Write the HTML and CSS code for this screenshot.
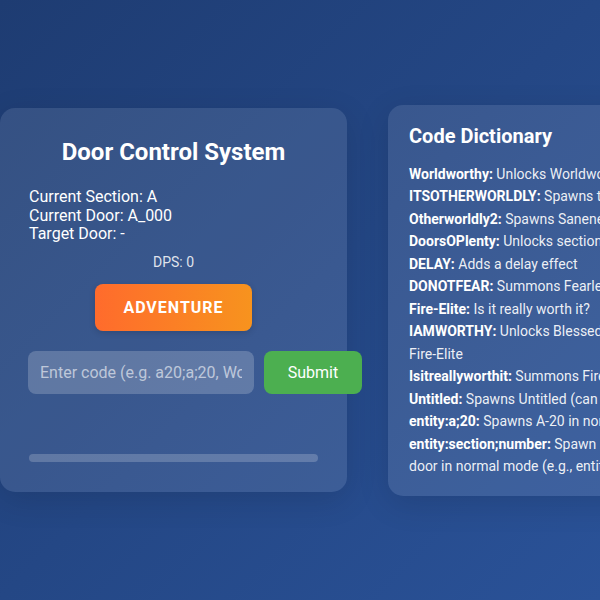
FILE: index.html
```html
<!DOCTYPE html>
<html lang="en">
<head>
<meta charset="utf-8">
<title>Door Control System</title>
<link rel="stylesheet" href="styles.css">
</head>
<body>
<main class="layout">
  <section class="panel control">
    <h1 class="panel-title">Door Control System</h1>
    <div class="status">
      <div>Current Section: A</div>
      <div>Current Door: A_000</div>
      <div>Target Door: -</div>
    </div>
    <div class="dps">DPS: 0</div>
    <button class="adventure" type="button">ADVENTURE</button>
    <div class="code-row">
      <input class="code-input" type="text" placeholder="Enter code (e.g. a20;a;20, Worldworthy)">
      <button class="submit" type="button">Submit</button>
    </div>
    <div class="progress"><div class="progress-fill"></div></div>
  </section>

  <section class="panel dictionary">
    <h2 class="dict-title">Code Dictionary</h2>
    <ul class="codes">
      <li><b>Worldworthy:</b> Unlocks Worldworthy mode</li>
      <li><b>ITSOTHERWORLDLY:</b> Spawns the Otherworldly</li>
      <li><b>Otherworldly2:</b> Spawns Sanenenel</li>
      <li><b>DoorsOPlenty:</b> Unlocks sections</li>
      <li><b>DELAY:</b> Adds a delay effect</li>
      <li><b>DONOTFEAR:</b> Summons Fearless</li>
      <li><b>Fire-Elite:</b> Is it really worth it?</li>
      <li><b>IAMWORTHY:</b> Unlocks Blessed mode and summons Fire-Elite</li>
      <li><b>Isitreallyworthit:</b> Summons Fire-Elite</li>
      <li><b>Untitled:</b> Spawns Untitled (can be anywhere)</li>
      <li><b>entity:a;20:</b> Spawns A-20 in normal mode</li>
      <li><b>entity:section;number:</b> Spawn an entity at the given door in normal mode (e.g., entity:a;20)</li>
    </ul>
  </section>
</main>
</body>
</html>
```
FILE: styles.css
```css
html, body {
  margin: 0;
  height: 100%;
}

body {
  font-family: Roboto, "Liberation Sans", sans-serif;
  color: #ffffff;
  background: linear-gradient(135deg, #1e3c72 0%, #2a5298 100%);
  overflow: hidden;
}

.layout {
  display: flex;
  align-items: center;
  gap: 41px;
  height: 600px;
  width: 900px;
}

.panel {
  background: rgba(255, 255, 255, 0.1);
  border-radius: 15px;
  box-shadow: 0 8px 32px rgba(0, 0, 0, 0.12);
  box-sizing: border-box;
  flex: none;
}

/* left control card */
.control {
  width: 347px;
  padding: 27px 29px 30px;
}

.panel-title {
  margin: 0 0 19px;
  font-size: 24px;
  font-weight: 700;
  text-align: center;
  line-height: 34px;
}

.status {
  font-size: 16px;
  line-height: 18.5px;
}

.dps {
  margin-top: 10px;
  font-size: 14px;
  text-align: center;
  color: rgba(255, 255, 255, 0.85);
}

.adventure {
  display: block;
  margin: 14px auto 0;
  width: 157px;
  height: 47px;
  border: none;
  border-radius: 8px;
  background: linear-gradient(90deg, #ff6b2c, #f7931e);
  color: #ffffff;
  font-family: inherit;
  font-size: 16px;
  font-weight: 700;
  letter-spacing: 1px;
  box-shadow: 0 2px 6px rgba(0, 0, 0, 0.15);
}

.code-row {
  display: flex;
  gap: 10px;
  margin-top: 20px;
  margin-left: -1px;
}

.code-input {
  flex: none;
  width: 226px;
  height: 43px;
  box-sizing: border-box;
  padding: 0 12px;
  border: none;
  border-radius: 8px;
  background: rgba(255, 255, 255, 0.2);
  color: #ffffff;
  font-family: inherit;
  font-size: 16px;
  outline: none;
}

.code-input::placeholder {
  color: rgba(255, 255, 255, 0.6);
}

.submit {
  flex: none;
  width: 98px;
  height: 43px;
  border: none;
  border-radius: 8px;
  background: #4caf50;
  color: #ffffff;
  font-family: inherit;
  font-size: 16px;
}

.progress {
  margin-top: 60px;
  height: 8px;
  border-radius: 4px;
  background: rgba(255, 255, 255, 0.2);
  overflow: hidden;
}

.progress-fill {
  width: 0;
  height: 100%;
}

/* right dictionary card */
.dictionary {
  width: 380px;
  padding: 17px 21px 18px;
}

.dict-title {
  margin: 0 0 13px;
  font-size: 20px;
  font-weight: 700;
  line-height: 28px;
}

.codes {
  list-style: none;
  margin: 0;
  padding: 0;
  font-size: 14px;
  line-height: 22.5px;
  color: rgba(255, 255, 255, 0.92);
}

.codes b {
  color: #ffffff;
}
```
